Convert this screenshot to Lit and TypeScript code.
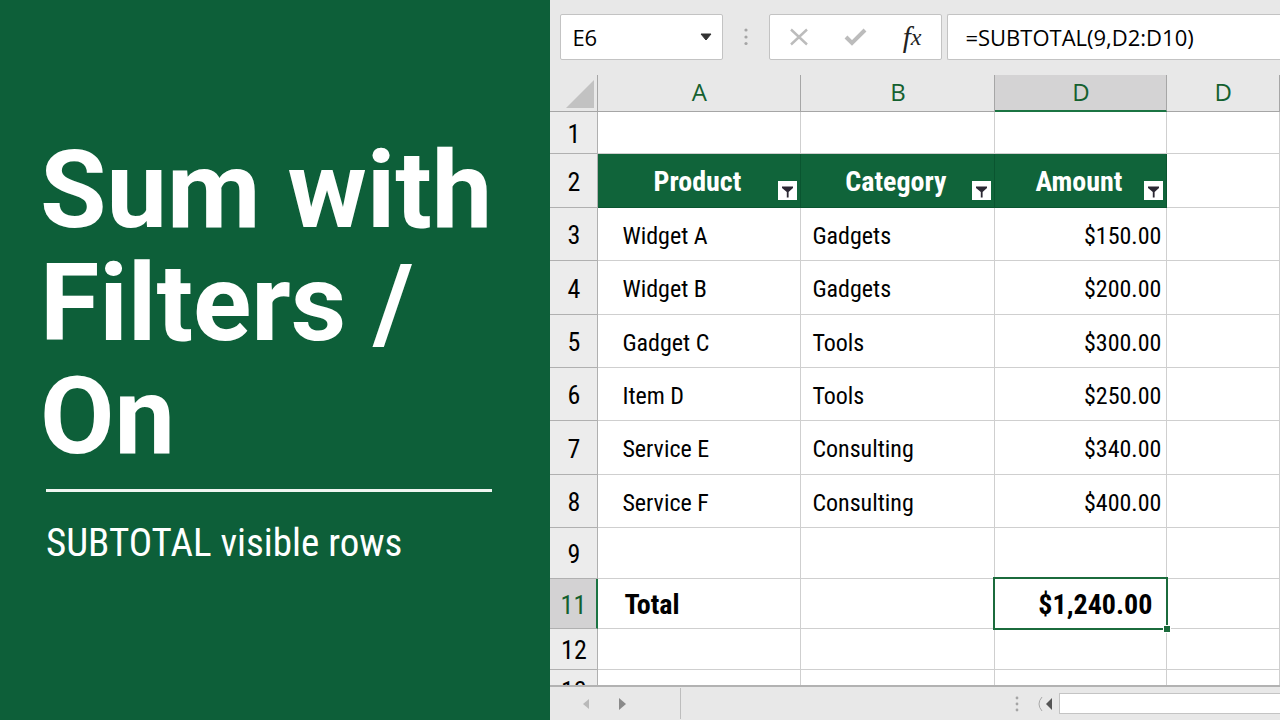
import { LitElement, html, css, svg } from "lit";
import { customElement, state } from "lit/decorators.js";
import { classMap } from "lit/directives/class-map.js";

interface Row {
  n: number;
  height: number;
  kind?: "head" | "total";
  cells: [string, string, string];
}

const COLUMNS = ["A", "B", "D", "D"];

const ROWS: Row[] = [
  { n: 1, height: 42, cells: ["", "", ""] },
  { n: 2, height: 54, kind: "head", cells: ["Product", "Category", "Amount"] },
  { n: 3, height: 53, cells: ["Widget A", "Gadgets", "$150.00"] },
  { n: 4, height: 54, cells: ["Widget B", "Gadgets", "$200.00"] },
  { n: 5, height: 53, cells: ["Gadget C", "Tools", "$300.00"] },
  { n: 6, height: 53, cells: ["Item D", "Tools", "$250.00"] },
  { n: 7, height: 54, cells: ["Service E", "Consulting", "$340.00"] },
  { n: 8, height: 53, cells: ["Service F", "Consulting", "$400.00"] },
  { n: 9, height: 51, cells: ["", "", ""] },
  { n: 11, height: 50, kind: "total", cells: ["Total", "", "$1,240.00"] },
  { n: 12, height: 41, cells: ["", "", ""] },
  { n: 13, height: 41, cells: ["", "", ""] },
];

const funnel = svg`<path d="M4 5.5h11v1.500l-4.400 4v5.500H8.800V11L4 7z" fill="#2b2733"/>`;

@customElement("title-panel")
class TitlePanel extends LitElement {
  static styles = css`
    :host {
      display: flex;
      flex-direction: column;
      justify-content: center;
      box-sizing: border-box;
      padding: 0 58px 18px 46px;
      background: #0d5f39;
      color: #fff;
      font-family: "Roboto Condensed", Roboto, sans-serif;
    }
    h1 {
      margin: 0 0 16px -6px;
      font-family: Roboto, sans-serif;
      font-size: 108px;
      line-height: 113px;
      font-weight: 700;
      white-space: nowrap;
    }
    hr {
      width: 100%;
      height: 3px;
      margin: 0 0 26px;
      border: 0;
      background: #eef5f0;
    }
    p {
      margin: 0;
      font-size: 39px;
      line-height: 50px;
    }
  `;

  render() {
    return html`
      <h1>Sum with<br />Filters /<br />On</h1>
      <hr />
      <p>SUBTOTAL visible rows</p>
    `;
  }
}

@customElement("formula-bar")
class FormulaBar extends LitElement {
  static styles = css`
    :host {
      display: flex;
      align-items: center;
      box-sizing: border-box;
      height: 75px;
      padding: 0 0 1px 10px;
      font-family: "Open Sans", "Noto Sans", sans-serif;
      color: #000;
    }
    .box {
      box-sizing: border-box;
      height: 46px;
      border: 1px solid #c3c3c3;
      border-radius: 2px;
      background: #fff;
    }
    .name {
      display: grid;
      width: 163px;
      align-items: center;
    }
    .name > * {
      grid-area: 1 / 1;
    }
    .name svg {
      justify-self: end;
      margin-right: 10px;
      pointer-events: none;
    }
    select,
    input {
      appearance: none;
      box-sizing: border-box;
      width: 100%;
      height: 44px;
      margin: 0;
      padding: 0 11px;
      border: 0;
      background: none;
      font: inherit;
      font-size: 22px;
      color: inherit;
      outline: none;
    }
    .grip {
      width: 46px;
      display: flex;
      justify-content: center;
    }
    .tools {
      display: flex;
      width: 173px;
      padding-right: 1px;
    }
    button {
      flex: 1;
      display: flex;
      align-items: center;
      justify-content: center;
      padding: 0;
      border: 0;
      background: none;
      color: #222;
    }
    .fx {
      font: italic 29px "Liberation Serif", serif;
    }
    .fx small {
      font-size: 24px;
    }
    .formula {
      flex: 1;
      min-width: 0;
      margin-left: 5px;
      border-right: 0;
      border-radius: 2px 0 0 2px;
    }
    .formula input {
      padding: 0 17px;
    }
  `;

  render() {
    return html`
      <div class="box name">
        <select aria-label="Name box">
          <option>E6</option>
        </select>
        <svg width="12" height="8" viewBox="0 0 12 8">
          <path d="M1 1h10L6 7z" fill="#333" stroke="#333" stroke-linejoin="round" />
        </svg>
      </div>
      <div class="grip">
        <svg width="4" height="18" viewBox="0 0 4 18" fill="#a5a5a5">
          <circle cx="2" cy="2" r="1.6" />
          <circle cx="2" cy="9" r="1.6" />
          <circle cx="2" cy="15.5" r="1.6" />
        </svg>
      </div>
      <div class="box tools">
        <button aria-label="Cancel">
          <svg width="20" height="20" viewBox="0 0 20 20" stroke="#bcbcbc" stroke-width="2.4">
            <path d="M2 2.5l16 15M18 2.5L2 17.5" />
          </svg>
        </button>
        <button aria-label="Enter">
          <svg width="24" height="20" viewBox="0 0 24 20" fill="none" stroke="#bcbcbc" stroke-width="4">
            <path d="M3 10l6 6L22 3" />
          </svg>
        </button>
        <button class="fx" aria-label="Insert function">f<small>x</small></button>
      </div>
      <div class="box formula">
        <input aria-label="Formula" value="=SUBTOTAL(9,D2:D10)" />
      </div>
    `;
  }
}

@customElement("sheet-grid")
class SheetGrid extends LitElement {
  @state() private activeRow = 11;

  static styles = css`
    :host {
      display: block;
      overflow: hidden;
      font-family: "Roboto Condensed", Roboto, sans-serif;
      font-size: 24px;
      line-height: 32px;
      color: #000;
    }
    table {
      width: 100%;
      table-layout: fixed;
      border-collapse: separate;
      border-spacing: 0;
    }
    th,
    td {
      box-sizing: border-box;
      padding: 0;
      border: 0 solid #cfcfcf;
      border-width: 0 1px 1px 0;
      font-weight: 400;
      text-align: left;
      white-space: nowrap;
      background: #fff;
    }
    .num {
      width: 48px;
    }
    .a {
      width: 203px;
    }
    .b {
      width: 194px;
    }
    .c {
      width: 172px;
    }
    thead th {
      height: 37px;
      padding-bottom: 2px;
      background: #e8e8e8;
      border-color: #a6a6a6;
      color: #14602f;
      text-align: center;
      font-family: "Open Sans", "Noto Sans", sans-serif;
      font-size: 24px;
    }
    thead th.active {
      padding-bottom: 1px;
      background: #d4d3d4;
      border-bottom: 2px solid #1b7443;
    }
    .corner svg {
      display: block;
      margin: 3px 3px 0 auto;
    }
    tbody th {
      padding-top: 2px;
      text-align: center;
      background: #ececec;
      border-color: #b0b0b0;
      font-size: 26px;
    }
    tbody th.active {
      background: #d3d2d3;
      border-right: 2px solid #1b7443;
      color: #14602f;
    }
    td {
      padding-top: 3px;
    }
    td.a {
      padding-left: 24px;
    }
    td.b {
      padding-left: 11px;
    }
    td.c {
      padding-right: 5px;
      text-align: right;
    }
    .head td.fill {
      position: relative;
      padding: 2px 4px 0 0;
      border-color: #0a5530;
      background: #10643a;
      color: #fff;
      font-size: 28px;
      font-weight: 700;
      text-align: center;
    }
    .filter {
      position: absolute;
      right: 3px;
      bottom: 7px;
      width: 19px;
      height: 19px;
      padding: 0;
      border: 0;
      background: #fff;
    }
    .filter svg {
      display: block;
    }
    .total td {
      padding-top: 2px;
      font-size: 28px;
      font-weight: 700;
    }
    .total td.a {
      padding-left: 26px;
    }
    .total td.c {
      position: relative;
      padding-right: 14px;
    }
    .cursor {
      position: absolute;
      inset: -2px;
      border: 2px solid #1b6b3c;
    }
    .handle {
      position: absolute;
      right: -5px;
      bottom: -5px;
      width: 6px;
      height: 6px;
      border: 1px solid #fff;
      background: #1b6b3c;
    }
  `;

  private renderCell(row: Row, text: string, i: number) {
    const col = ["a", "b", "c"][i];
    const selected = row.kind === "total" && i === 2;
    return html`<td class="${col} ${row.kind === "head" ? "fill" : ""}">
      ${text}${row.kind === "head"
        ? html`<button class="filter" aria-label="Filter ${text}">
            <svg width="19" height="19" viewBox="0 0 19 19">${funnel}</svg>
          </button>`
        : ""}${selected
        ? html`<div class="cursor"></div>
            <div class="handle"></div>`
        : ""}
    </td>`;
  }

  render() {
    return html`
      <table>
        <thead>
          <tr>
            <th class="num corner">
              <svg width="28" height="28" viewBox="0 0 28 28"><path d="M28 0v28H0z" fill="#c2c2c2" /></svg>
            </th>
            ${COLUMNS.map(
              (c, i) => html`<th class="${["a", "b", "c", "d"][i]} ${i === 2 ? "active" : ""}" scope="col">${c}</th>`
            )}
          </tr>
        </thead>
        <tbody>
          ${ROWS.map(
            (r) => html`<tr class=${r.kind ?? ""} style="height:${r.height}px">
              <th class=${classMap({ active: r.n === this.activeRow })} scope="row">${r.n}</th>
              ${r.cells.map((t, i) => this.renderCell(r, t, i))}
              <td></td>
            </tr>`
          )}
        </tbody>
      </table>
    `;
  }
}

@customElement("sheet-footer")
class SheetFooter extends LitElement {
  static styles = css`
    :host {
      display: flex;
      align-items: center;
      box-sizing: border-box;
      height: 35px;
      border-top: 2px solid #b2b2b2;
      background: #e8e8e8;
    }
    .tabs {
      display: flex;
      box-sizing: border-box;
      width: 131px;
      height: 31px;
      align-items: center;
      gap: 28px;
      padding-left: 31px;
      border-right: 1px solid #bdbdbd;
    }
    button {
      display: flex;
      padding: 0;
      border: 0;
      background: none;
    }
    .scroll {
      flex: 1;
      display: flex;
      align-items: center;
      justify-content: flex-end;
    }
    .left {
      margin: 0 6px 0 18px;
    }
    .track {
      box-sizing: border-box;
      width: 221px;
      height: 21px;
      border: 1px solid #c4c4c4;
      border-right: 0;
      background: #fff;
    }
  `;

  render() {
    return html`
      <div class="tabs">
        <button aria-label="Previous sheet">
          <svg width="9" height="14" viewBox="0 0 9 14"><path d="M8 2v10L2 7z" fill="#b9b9b9" /></svg>
        </button>
        <button aria-label="Next sheet">
          <svg width="9" height="14" viewBox="0 0 9 14"><path d="M1 1v12l7-6z" fill="#8a8a8a" /></svg>
        </button>
      </div>
      <div class="scroll">
        <svg width="4" height="16" viewBox="0 0 4 16" fill="#a5a5a5">
          <circle cx="2" cy="2" r="1.4" />
          <circle cx="2" cy="8" r="1.4" />
          <circle cx="2" cy="14" r="1.4" />
        </svg>
        <button class="left" aria-label="Scroll left">
          <svg width="16" height="16" viewBox="0 0 16 16">
            <path d="M5 1Q-1 8 5 15" fill="none" stroke="#a8a8a8" />
            <path d="M15 2v12L9 8z" fill="#555" />
          </svg>
        </button>
        <div class="track"></div>
      </div>
    `;
  }
}

@customElement("app-root")
class AppRoot extends LitElement {
  static styles = css`
    :host {
      display: grid;
      grid-template-columns: 43% minmax(0, 1fr);
      height: 100vh;
      overflow: hidden;
    }
    .sheet {
      display: flex;
      flex-direction: column;
      min-height: 0;
      background: #e8e8e8;
    }
    sheet-grid {
      flex: 1;
      min-height: 0;
    }
  `;

  render() {
    return html`
      <title-panel></title-panel>
      <main class="sheet">
        <formula-bar></formula-bar>
        <sheet-grid></sheet-grid>
        <sheet-footer></sheet-footer>
      </main>
    `;
  }
}
